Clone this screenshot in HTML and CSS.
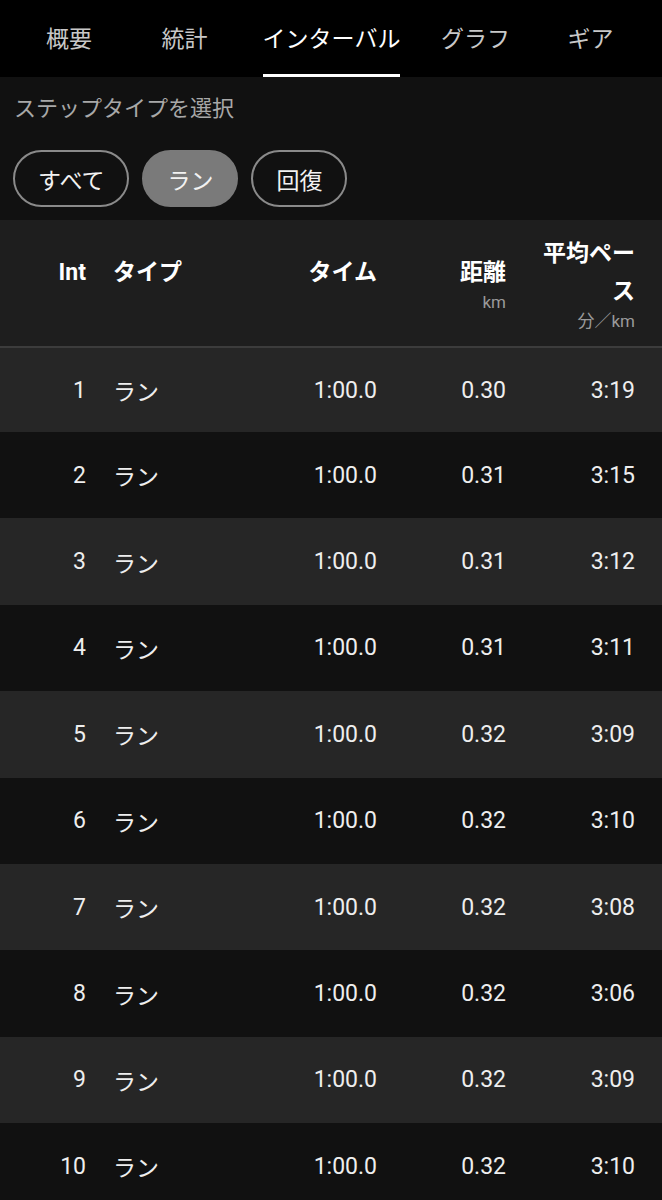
FILE: index.html
```html
<!DOCTYPE html>
<html lang="ja">
<head>
<meta charset="UTF-8">
<title>インターバル</title>
<link rel="stylesheet" href="styles.css">
</head>
<body>
<div class="tabs">
    <div class="tab"><span>概要</span></div>
    <div class="tab"><span>統計</span></div>
    <div class="tab active"><span>インターバル</span></div>
    <div class="tab"><span>グラフ</span></div>
    <div class="tab"><span>ギア</span></div>
</div>
<div class="filter">
    <div class="filter-label">ステップタイプを選択</div>
    <div class="chips">
        <div class="chip">すべて</div>
        <div class="chip selected">ラン</div>
        <div class="chip">回復</div>
    </div>
</div>
<div class="table">
    <div class="row head">
        <div class="cell num"><div class="title">Int</div><div class="unit">&nbsp;</div></div>
        <div class="cell type"><div class="title">タイプ</div><div class="unit">&nbsp;</div></div>
        <div class="cell"><div class="title">タイム</div><div class="unit">&nbsp;</div></div>
        <div class="cell"><div class="title">距離</div><div class="unit">km</div></div>
        <div class="cell"><div class="title">平均ペース</div><div class="unit">分／km</div></div>
    </div>
    <div id="rows"></div>
</div>
<script>
let laps = [
    ['0.30', '3:19'], ['0.31', '3:15'], ['0.31', '3:12'], ['0.31', '3:11'], ['0.32', '3:09'],
    ['0.32', '3:10'], ['0.32', '3:08'], ['0.32', '3:06'], ['0.32', '3:09'], ['0.32', '3:10']
];
let html = '';
for (let i = 0; i < laps.length; i++) {
    html += '<div class="row">' +
        '<div class="cell num">' + (i + 1) + '</div>' +
        '<div class="cell type">ラン</div>' +
        '<div class="cell">1:00.0</div>' +
        '<div class="cell">' + laps[i][0] + '</div>' +
        '<div class="cell">' + laps[i][1] + '</div>' +
        '</div>';
}
document.getElementById('rows').innerHTML = html;
</script>
</body>
</html>
```

FILE: styles.css
```css
body {
    margin: 0;
    padding: 0;
    background-color: #111111;
    color: #eeeeee;
    font-family: Roboto, "Noto Sans CJK JP", sans-serif;
    font-size: 23px;
    overflow: hidden;
}
.tabs {
    display: grid;
    grid-template-columns: 138px 93px 201px 87px 1fr;
    height: 77px;
    background-color: #000;
}
.tab {
    display: flex;
    justify-content: center;
    color: #c8c8c8;
}
.tab span {
    display: flex;
    align-items: center;
    border-bottom: 3px solid transparent;
    box-sizing: border-box;
    height: 77px;
}
.tab.active {
    color: #ffffff;
}
.tab.active span {
    border-bottom-color: #ffffff;
}
.filter {
    padding: 15px 13px 13px 13px;
}
.filter-label {
    color: #a8a8a8;
    font-size: 22px;
    padding-left: 1px;
    line-height: 34px;
}
.chips {
    display: flex;
    gap: 13px;
    margin-top: 24px;
}
.chip {
    height: 57px;
    box-sizing: border-box;
    padding: 0 23px;
    border: 2px solid #8a8a8a;
    border-radius: 29px;
    display: flex;
    align-items: center;
    color: #f2f2f2;
}
.chip.selected {
    background-color: #7a7a7a;
    border-color: #7a7a7a;
}
.row {
    display: grid;
    grid-template-columns: 100px 175px 129px 129px 1fr;
    height: 86.4px;
    align-items: center;
}
#rows .row:nth-child(odd) {
    background-color: #262626;
}
#rows .row:nth-child(even) {
    background-color: #111111;
}
#rows .row:first-child {
    height: 84px;
}
.row.head {
    height: 126px;
    background-color: #1e1e1e;
    border-bottom: 2px solid #3c3c3c;
}
.cell {
    text-align: right;
    padding-right: 27px;
}
.cell.num {
    padding-right: 14px;
}
.cell.type {
    text-align: left;
    padding-left: 13px;
    padding-right: 0;
}
.head .title {
    font-weight: bold;
    color: #ffffff;
    line-height: 38px;
}
.head .unit {
    font-size: 17px;
    line-height: 20px;
    color: #9a9a9a;
}
```
